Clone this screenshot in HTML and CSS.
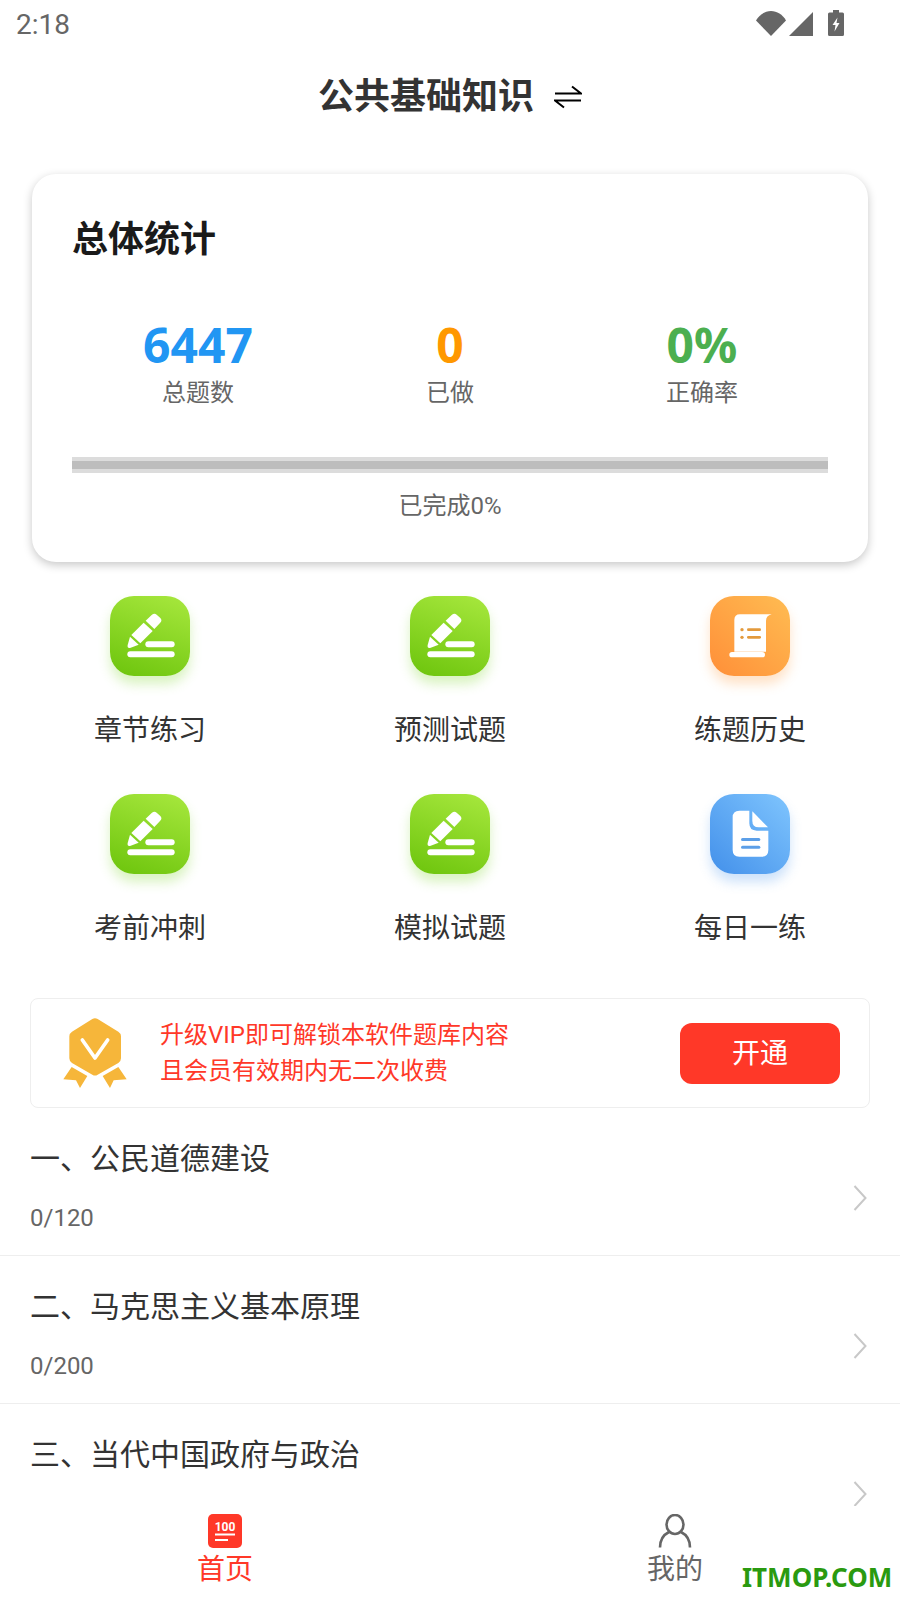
FILE: index.html
```html
<!DOCTYPE html>
<html lang="zh-CN">
<head>
<meta charset="utf-8">
<title>公共基础知识</title>
<link rel="stylesheet" href="styles.css">
</head>
<body>
<div class="page">
  <div class="status">
    <span class="time">2:18</span>
    <div class="status-icons">
      <svg class="ic-wifi" viewBox="0 0 30 25"><path d="M0 9.5C3.5 3.5 9 0 15 0s11.500 3.500 15 9.500L15 25z"/></svg>
      <svg class="ic-signal" viewBox="0 0 24 24"><path d="M24 0v24H0z"/></svg>
      <svg class="ic-batt" viewBox="0 0 16 26"><path fill-rule="evenodd" d="M5 0h6v2.500h3.500q1.500 0 1.500 1.500v20.500q0 1.500-1.500 1.500h-13Q0 26 0 24.500V4q0-1.500 1.500-1.500H5zM9.500 7.500 4.500 15h3l-1 6.500 5-8.500h-3z"/></svg>
    </div>
  </div>

  <header class="head">
    <h1 class="head-title">公共基础知识</h1>
    <svg class="ic-swap" viewBox="0 0 28 24"><path d="M1 8.500h26l-9-7M27 15.500H1l9 7"/></svg>
  </header>

  <section class="card">
    <h2 class="card-title">总体统计</h2>
    <div class="stats">
      <div class="stat"><div class="num blue">6447</div><div class="lab">总题数</div></div>
      <div class="stat"><div class="num orange">0</div><div class="lab">已做</div></div>
      <div class="stat"><div class="num green">0%</div><div class="lab">正确率</div></div>
    </div>
    <div class="bar"><div class="bar-in"></div></div>
    <div class="done">已完成0%</div>
  </section>

  <nav class="grid">
    <div class="cell">
      <div class="tile t-green">
        <svg viewBox="60 48 240 240"><use href="#pen"/></svg>
      </div>
      <div class="cell-lab">章节练习</div>
    </div>
    <div class="cell">
      <div class="tile t-green">
        <svg viewBox="60 48 240 240"><use href="#pen"/></svg>
      </div>
      <div class="cell-lab">预测试题</div>
    </div>
    <div class="cell">
      <div class="tile t-orange">
        <svg viewBox="60 48 240 240">
          <path fill="#fff" d="M133 120q0-17 17-17h95q-17 4-17 20v92H133z"/>
          <rect fill="#fff" x="118" y="216" width="107" height="16" rx="8"/>
          <g fill="#e39a3c"><circle cx="156" cy="149" r="5"/><circle cx="156" cy="172" r="5"/><rect x="171" y="145" width="42" height="8" rx="4"/><rect x="171" y="168" width="42" height="8" rx="4"/></g>
        </svg>
      </div>
      <div class="cell-lab">练题历史</div>
    </div>
    <div class="cell">
      <div class="tile t-green">
        <svg viewBox="60 48 240 240"><use href="#pen"/></svg>
      </div>
      <div class="cell-lab">考前冲刺</div>
    </div>
    <div class="cell">
      <div class="tile t-green">
        <svg viewBox="60 48 240 240"><use href="#pen"/></svg>
      </div>
      <div class="cell-lab">模拟试题</div>
    </div>
    <div class="cell">
      <div class="tile t-blue">
        <svg viewBox="60 42 240 240">
          <path fill="#fff" d="M148 92h30v38q0 22 22 22h35v58q0 20-20 20h-67q-20 0-20-20V112q0-20 20-20z"/>
          <path fill="#fff" d="M187 94l47 48h-28q-19 0-19-19z"/>
          <g fill="#5c9fe8"><rect x="153" y="174" width="58" height="9" rx="4.500"/><rect x="153" y="197" width="58" height="9" rx="4.500"/></g>
        </svg>
      </div>
      <div class="cell-lab">每日一练</div>
    </div>
  </nav>

  <section class="vip">
    <svg class="medal" viewBox="40 38 190 210">
      <path fill="#f6b63a" d="M127 41q8-5 16 0l62 38q8 5 8 14v66q0 9-8 14l-62 35q-8 5-16 0l-61-35q-8-5-8-14V93q0-9 8-14z"/>
      <path fill="none" stroke="#fff" stroke-width="11" stroke-linecap="round" stroke-linejoin="round" d="M97 104l38 54 38-54"/>
      <path fill="#f6b63a" d="M65 185l47 27-22 36-12-23-38-3zM205 185l-47 27 22 36 11-23 39-3z"/>
    </svg>
    <div class="vip-text">
      <div>升级VIP即可解锁本软件题库内容</div>
      <div>且会员有效期内无二次收费</div>
    </div>
    <div class="vip-btn">开通</div>
  </section>

  <section class="list">
    <div class="row">
      <div class="row-main"><div class="row-title">一、公民道德建设</div><div class="row-sub">0/120</div></div>
      <svg class="chev" viewBox="0 0 14 26"><path d="M1.500 1l11 12-11 12"/></svg>
    </div>
    <div class="row">
      <div class="row-main"><div class="row-title">二、马克思主义基本原理</div><div class="row-sub">0/200</div></div>
      <svg class="chev" viewBox="0 0 14 26"><path d="M1.500 1l11 12-11 12"/></svg>
    </div>
    <div class="row">
      <div class="row-main"><div class="row-title">三、当代中国政府与政治</div></div>
      <svg class="chev" viewBox="0 0 14 26"><path d="M1.500 1l11 12-11 12"/></svg>
    </div>
  </section>

  <footer class="tabs">
    <div class="tab active">
      <svg class="tab-ic" viewBox="0 0 34 34">
        <rect width="34" height="34" rx="5" fill="#ff3828"/>
        <text class="tab-100" x="17" y="16.500" text-anchor="middle">100</text>
        <rect x="7" y="19.500" width="20" height="2" fill="#fff"/>
        <rect x="7" y="25" width="13" height="2" fill="#fff"/>
      </svg>
      <div class="tab-lab">首页</div>
    </div>
    <div class="tab">
      <svg class="tab-ic" viewBox="0 0 34 34">
        <ellipse cx="17" cy="10.500" rx="8.500" ry="9.500" fill="none" stroke="#666" stroke-width="2.600"/>
        <path d="M2 33.500C2 25 7 20 11 18M32 33.500C32 25 27 20 23 18" fill="none" stroke="#666" stroke-width="2.600"/>
      </svg>
      <div class="tab-lab">我的</div>
    </div>
  </footer>

  <div class="mark">ITMOP.COM</div>

  <svg class="defs" width="0" height="0">
    <defs>
      <g id="pen" fill="#fff">
        <path d="M167 122l18-17q8-7 15-1l11 10q7 8-1 15l-17 18z"/>
        <path d="M161 128l27 25-37 37-27-25z"/>
        <path d="M120 170l26 24-24 9q-11 3-9-8z"/>
        <rect x="166" y="184" width="88" height="18" rx="9"/>
        <rect x="112" y="214" width="142" height="18" rx="9"/>
      </g>
    </defs>
  </svg>
</div>
</body>
</html>
```

FILE: styles.css
```css
* { box-sizing: border-box; }
html, body { margin: 0; padding: 0; background: #fff; }
body { font-family: Roboto, "Noto Sans CJK SC", sans-serif; }

.page {
  position: relative;
  width: 900px;
  height: 1600px;
  overflow: hidden;
  display: flex;
  flex-direction: column;
  background: #fff;
}

.status {
  flex: none;
  height: 50px;
  display: flex;
  align-items: center;
  justify-content: space-between;
  padding: 0 56px 0 16px;
}
.time { font-size: 28px; line-height: 50px; color: #666; }
.status-icons { display: flex; align-items: flex-start; height: 50px; padding-top: 10px; }
.status-icons svg { display: block; fill: #666; }
.ic-wifi { width: 30px; height: 25px; margin-top: 1px; }
.ic-signal { width: 24px; height: 24px; margin: 2px 0 0 3px; }
.ic-batt { width: 16px; height: 26px; margin-left: 15px; }

.head {
  flex: none;
  height: 94px;
  display: flex;
  align-items: center;
  justify-content: center;
  gap: 20px;
}
.head-title { margin: 0; font-size: 36px; line-height: 50px; font-weight: 700; color: #333; }
.ic-swap { width: 28px; height: 24px; fill: none; stroke: #000; stroke-width: 2; }

.card {
  flex: none;
  height: 388px;
  margin: 30px 32px 0;
  padding: 41px 40px 0;
  border-radius: 24px;
  background: #fff;
  box-shadow: 0 3px 10px rgba(0, 0, 0, .22);
}
.card-title { margin: 0; font-size: 36px; line-height: 50px; font-weight: 700; color: #1a1a1a; }
.stats { display: grid; grid-template-columns: repeat(3, 1fr); margin-top: 50px; }
.stat { text-align: center; }
.num { font-family: "Noto Sans", sans-serif; font-size: 48px; line-height: 60px; font-weight: 700; }
.blue { color: #2196f3; }
.orange { color: #ff9800; }
.green { color: #4caf50; }
.lab { font-size: 24px; line-height: 36px; color: #666; }
.bar { height: 16px; margin-top: 46px; padding: 4px 0; background: #dcdcdc; }
.bar-in { height: 8px; background: #bdbdbd; }
.done { margin-top: 15px; font-size: 24px; line-height: 36px; text-align: center; color: #666; }

.grid {
  flex: none;
  display: grid;
  grid-template-columns: repeat(3, 1fr);
  row-gap: 43px;
  padding-top: 34px;
}
.cell { display: flex; flex-direction: column; align-items: center; }
.tile { width: 80px; height: 80px; border-radius: 24px; }
.tile svg { display: block; width: 80px; height: 80px; }
.t-green { background: linear-gradient(200deg, #a8e83e, #6cc40c); box-shadow: 0 8px 12px rgba(130, 215, 50, .3); }
.t-orange { background: linear-gradient(225deg, #ffbc52, #ff8f38); box-shadow: 0 8px 12px rgba(255, 160, 70, .3); }
.t-blue { background: linear-gradient(225deg, #7fc5fe, #4390ea); box-shadow: 0 8px 12px rgba(90, 160, 240, .3); }
.cell-lab { margin-top: 35px; font-size: 28px; line-height: 40px; color: #333; }

.vip {
  flex: none;
  height: 110px;
  margin: 49px 30px 0;
  padding: 0 29px 0 32px;
  display: flex;
  align-items: center;
  border: 1px solid #eee;
  border-radius: 8px;
}
.medal { flex: none; width: 64px; height: 70px; }
.vip-text { flex: 1; margin-left: 33px; font-size: 24px; line-height: 36px; color: #ff3828; }
.vip-btn {
  flex: none;
  width: 160px;
  height: 61px;
  border-radius: 12px;
  background: #ff3828;
  color: #fff;
  font-size: 28px;
  line-height: 61px;
  text-align: center;
}

.list { flex: 1; min-height: 0; overflow: hidden; }
.row {
  height: 148px;
  padding: 0 33px 0 30px;
  display: flex;
  align-items: center;
  justify-content: space-between;
  border-bottom: 1px solid #eee;
}
.row-main { align-self: flex-start; padding-top: 29px; }
.row-title { font-size: 30px; line-height: 44px; color: #333; }
.row-sub { margin-top: 19px; font-size: 24px; line-height: 36px; color: #666; }
.chev { width: 14px; height: 26px; margin-top: 32px; fill: none; stroke: #c8c8c8; stroke-width: 2; }

.tabs {
  flex: none;
  height: 94px;
  display: grid;
  grid-template-columns: 1fr 1fr;
  background: #fff;
  padding-top: 8px;
}
.tab { display: flex; flex-direction: column; align-items: center; color: #666; }
.tab.active { color: #ff3828; }
.tab-ic { display: block; width: 34px; height: 34px; }
.tab-100 { font-family: Roboto, sans-serif; font-size: 12px; font-weight: 700; fill: #fff; }
.tab-lab { margin-top: 2px; font-size: 28px; line-height: 40px; }

.mark {
  position: absolute;
  left: 742px;
  top: 1560px;
  font-family: "Noto Sans", sans-serif;
  font-size: 26px;
  line-height: 34px;
  font-weight: 700;
  color: #2a9a10;
}
.defs { position: absolute; }
```
